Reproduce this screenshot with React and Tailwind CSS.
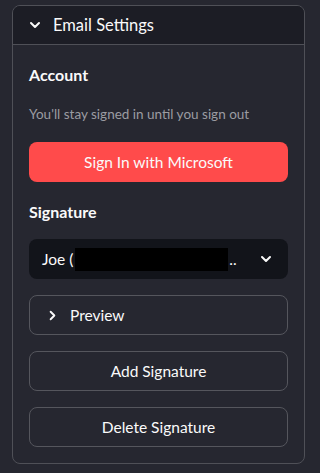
import { ChevronDown, ChevronRight } from 'lucide-react'

const font = { fontFamily: 'Lato, "Noto Sans", sans-serif' }

function OutlineButton({ children }) {
  return (
    <button className="h-10 w-full rounded-lg border border-[#55565d] bg-[#262730] text-[15.5px] text-[#fafafa]">
      {children}
    </button>
  )
}

export default function App() {
  return (
    <div className="h-[473px] w-[320px] bg-[#262730] pt-[5px] pl-3 pr-[15px]" style={font}>
      <div className="overflow-hidden rounded-lg border border-[#4f5057] h-[459px]">
        {/* header */}
        <div className="flex h-[39px] items-center gap-[10px] border-b border-[#4f5057] bg-[#1c1d25] pl-[14px] text-[#fafafa]">
          <ChevronDown size={16} strokeWidth={3} />
          <span className="text-[16.5px]">Email Settings</span>
        </div>

        <div className="flex flex-col px-4">
          <div className="mt-[18px] text-[16px] font-bold text-[#fafafa]">Account</div>
          <div className="mt-[17px] text-[13.5px] text-[#9b9ca2]">You'll stay signed in until you sign out</div>

          <button className="mt-[18px] h-10 w-full rounded-lg bg-[#ff4b4b] text-[15.5px] text-[#fafafa]">
            Sign In with Microsoft
          </button>

          <div className="mt-[18px] text-[16px] font-bold text-[#fafafa]">Signature</div>

          {/* select */}
          <div className="mt-[15px] flex h-10 items-center rounded-lg bg-[#12141a] pl-[13px] pr-[14px] text-[15.5px] text-[#fafafa]">
            <span>Joe (</span>
            <span className="ml-[2px] h-[23px] w-[153px] bg-black" />
            <span className="ml-[1px]">..</span>
            <span className="flex-1" />
            <ChevronDown size={16} strokeWidth={3} />
          </div>

          {/* preview expander */}
          <div className="mt-4 flex h-10 items-center gap-[10px] rounded-lg border border-[#55565d] pl-[15px] text-[15.5px] text-[#fafafa]">
            <ChevronRight size={15} strokeWidth={3} />
            <span>Preview</span>
          </div>

          <div className="mt-4">
            <OutlineButton>Add Signature</OutlineButton>
          </div>
          <div className="mt-4">
            <OutlineButton>Delete Signature</OutlineButton>
          </div>
        </div>
      </div>
    </div>
  )
}
